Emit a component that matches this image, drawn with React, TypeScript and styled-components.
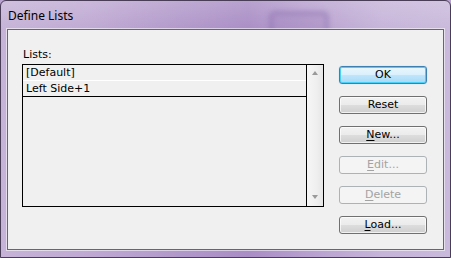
import styled, { createGlobalStyle } from "styled-components";

const GlobalStyle = createGlobalStyle`
  html, body {
    margin: 0;
    padding: 0;
    background: #b9a3cf;
  }
  * {
    box-sizing: border-box;
  }
`;

const buttons = [
  { label: "OK", key: "", isDefault: true },
  { label: "Reset", key: "" },
  { label: "New...", key: "N" },
  { label: "Edit...", key: "E", disabled: true },
  { label: "Delete", key: "D", disabled: true },
  { label: "Load...", key: "L" },
];

const lists = [
  { name: "[Default]", divider: "light" as const },
  { name: "Left Side+1", divider: "dark" as const },
];

const renderLabel = (label: string, key: string) => {
  if (!key || label[0] !== key) return label;
  return (
    <>
      <Mnemonic>{label[0]}</Mnemonic>
      {label.slice(1)}
    </>
  );
};

export default function App() {
  return (
    <>
      <GlobalStyle />
      <Window>
        <Reflection />
        <TitleBar>Define Lists</TitleBar>
        <Client>
          <ListPanel>
            <FieldLabel>Lists:</FieldLabel>
            <ListBox>
              <Items>
                {lists.map((item) => (
                  <ListRow key={item.name} $divider={item.divider}>
                    {item.name}
                  </ListRow>
                ))}
              </Items>
              <ScrollBar>
                <Arrow $dir="up" />
                <Arrow $dir="down" />
              </ScrollBar>
            </ListBox>
          </ListPanel>
          <ButtonColumn>
            {buttons.map((b) => (
              <DialogButton
                key={b.label}
                $default={b.isDefault}
                disabled={b.disabled}
              >
                {renderLabel(b.label, b.key)}
              </DialogButton>
            ))}
          </ButtonColumn>
        </Client>
      </Window>
    </>
  );
}

const Window = styled.div`
  position: relative;
  width: 451px;
  height: 258px;
  display: flex;
  flex-direction: column;
  padding: 0 6px 7px 6px;
  border: 1px solid #4a3d58;
  border-radius: 6px 6px 0 0;
  overflow: hidden;
  background:
    linear-gradient(180deg, rgba(255, 255, 255, 0.18) 0%, rgba(255, 255, 255, 0) 30px),
    linear-gradient(
      90deg,
      #c6b3d7 0%,
      #bfa9d3 20%,
      #b198ca 40%,
      #a98dc5 55%,
      #b9a2d0 70%,
      #c6b4d9 85%,
      #c9b9db 100%
    );
`;

const Reflection = styled.div`
  position: absolute;
  left: 268px;
  top: 10px;
  width: 60px;
  height: 40px;
  border: 4px solid rgba(120, 95, 160, 0.3);
  background: rgba(150, 120, 185, 0.25);
  border-radius: 6px;
  filter: blur(2.5px);
`;

const TitleBar = styled.div`
  position: relative;
  height: 28px;
  padding: 7px 0 0 1px;
  font-family: "Noto Sans", "Open Sans", sans-serif;
  font-size: 12px;
  line-height: 16px;
  color: #000;
`;

const Client = styled.div`
  position: relative;
  flex: 1;
  display: flex;
  padding: 18px 16px 0 14px;
  background: #f0f0f0;
  border: 1px solid #6c6179;
  box-shadow: 0 0 0 1px rgba(255, 255, 255, 0.55);
  font-family: "DejaVu Sans", Verdana, sans-serif;
  font-size: 11px;
  color: #000;
`;

const ListPanel = styled.div`
  display: flex;
  flex-direction: column;
  width: 303px;
`;

const FieldLabel = styled.div`
  height: 13px;
  line-height: 13px;
  margin-bottom: 3px;
  padding-left: 1px;
`;

const ListBox = styled.div`
  display: flex;
  height: 143px;
  border: 1px solid #000;
  background: #f0f0f0;
`;

const Items = styled.div`
  flex: 1;
  display: flex;
  flex-direction: column;
  border-right: 1px solid #000;
`;

const ListRow = styled.div<{ $divider: "light" | "dark" }>`
  height: 16px;
  line-height: 15px;
  padding-left: 3px;
  white-space: nowrap;
  border-bottom: 1px solid ${(p) => (p.$divider === "dark" ? "#000" : "#ffffff")};
`;

const ScrollBar = styled.div`
  width: 16px;
  display: flex;
  flex-direction: column;
  justify-content: space-between;
  align-items: center;
  padding: 6px 0 7px;
  background: linear-gradient(90deg, #f6f6f6 0%, #efefef 60%, #e6e6e6 100%);
`;

const Arrow = styled.div<{ $dir: "up" | "down" }>`
  width: 0;
  height: 0;
  border-left: 3.5px solid transparent;
  border-right: 3.5px solid transparent;
  ${(p) =>
    p.$dir === "up"
      ? "border-bottom: 4px solid #9a9a9a;"
      : "border-top: 4px solid #9a9a9a;"}
`;

const ButtonColumn = styled.div`
  display: flex;
  flex-direction: column;
  gap: 12px;
  margin-left: 15px;
  padding-top: 18px;
`;

const DialogButton = styled.button<{ $default?: boolean }>`
  width: 88px;
  height: 18px;
  padding: 0;
  font-family: "DejaVu Sans", Verdana, sans-serif;
  font-size: 11px;
  line-height: 16px;
  color: #000;
  border-radius: 3px;
  border: 1px solid ${(p) => (p.$default ? "#3c7fb1" : "#707070")};
  background: ${(p) =>
    p.$default
      ? "linear-gradient(180deg, #eaf6fd 0%, #d9f0fc 50%, #bee6fd 51%, #a7d9f5 100%)"
      : "linear-gradient(180deg, #f2f2f2 0%, #ebebeb 50%, #dddddd 51%, #cfcfcf 100%)"};
  box-shadow: ${(p) =>
    p.$default
      ? "inset 0 0 0 1px #48d0f8, 0 0 1px #7ecbf0"
      : "inset 0 0 0 1px rgba(255, 255, 255, 0.7)"};

  &:disabled {
    color: #a3a3a3;
    border-color: #adb2b5;
    background: #f4f4f4;
    box-shadow: none;
  }
`;

const Mnemonic = styled.span`
  text-decoration: underline;
  text-underline-offset: 2px;
`;
